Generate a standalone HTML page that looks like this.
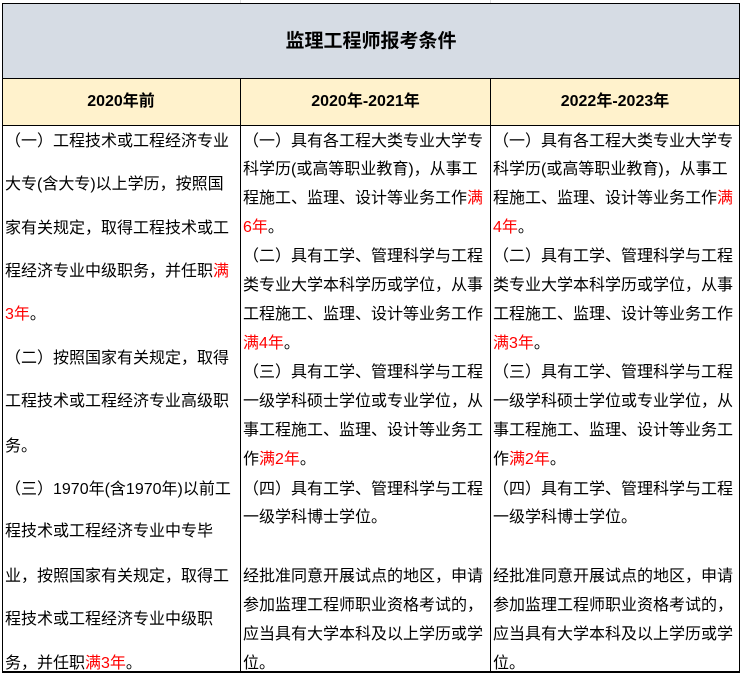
<!DOCTYPE html>
<html><head><meta charset="utf-8"><style>
*{margin:0;padding:0;box-sizing:border-box}
body{width:742px;height:676px;background:#fff;position:relative;overflow:hidden;font-family:"Liberation Sans","Noto Sans CJK SC",sans-serif;color:#000}
.b{position:absolute;background:#000}
.l{position:absolute;font-size:16px;line-height:22px;height:22px;white-space:nowrap;margin-top:2px}
.r{color:#f00}
.h{position:absolute;font-weight:bold;text-align:center;white-space:nowrap}
</style></head><body>
<div style="position:absolute;left:2px;top:3px;width:738px;height:75px;background:#d6dce4"></div>
<div style="position:absolute;left:2px;top:78px;width:738px;height:47px;background:#fff2cc"></div>
<div style="position:absolute;left:240px;top:0;width:1px;height:3px;background:#ddd"></div>
<div style="position:absolute;left:490px;top:0;width:1px;height:3px;background:#ddd"></div>
<div class="b" style="left:2px;top:3px;width:738px;height:1px"></div>
<div class="b" style="left:2px;top:78px;width:738px;height:1px"></div>
<div class="b" style="left:2px;top:125px;width:738px;height:1px"></div>
<div class="b" style="left:2px;top:671px;width:738px;height:2px"></div>
<div class="b" style="left:2px;top:3px;width:1px;height:670px"></div>
<div class="b" style="left:739px;top:3px;width:1px;height:670px"></div>
<div class="b" style="left:240px;top:78px;width:1px;height:595px"></div>
<div class="b" style="left:490px;top:78px;width:1px;height:595px"></div>
<div class="h" style="left:2px;width:738px;top:29px;font-size:19px;line-height:26px">监理工程师报考条件</div>
<div class="h" style="left:2px;width:238px;top:91px;font-size:16px;line-height:22px">2020年前</div>
<div class="h" style="left:241px;width:249px;top:91px;font-size:16px;line-height:22px">2020年-2021年</div>
<div class="h" style="left:491px;width:248px;top:91px;font-size:16px;line-height:22px">2022年-2023年</div>

<div class="l" style="left:5px;top:129px">（一）工程技术或工程经济专业</div>
<div class="l" style="left:5px;top:172px">大专(含大专)以上学历，按照国</div>
<div class="l" style="left:5px;top:216px">家有关规定，取得工程技术或工</div>
<div class="l" style="left:5px;top:259px">程经济专业中级职务，并任职<span class="r">满</span></div>
<div class="l" style="left:5px;top:302px"><span class="r">3年</span>。</div>
<div class="l" style="left:5px;top:346px">（二）按照国家有关规定，取得</div>
<div class="l" style="left:5px;top:389px">工程技术或工程经济专业高级职</div>
<div class="l" style="left:5px;top:434px">务。</div>
<div class="l" style="left:5px;top:477px">（三）1970年(含1970年)以前工</div>
<div class="l" style="left:5px;top:519px">程技术或工程经济专业中专毕</div>
<div class="l" style="left:5px;top:564px">业，按照国家有关规定，取得工</div>
<div class="l" style="left:5px;top:607px">程技术或工程经济专业中级职</div>
<div class="l" style="left:5px;top:651px">务，并任职<span class="r">满3年</span>。</div>

<div class="l" style="left:243px;top:129px">（一）具有各工程大类专业大学专</div>
<div class="l" style="left:243px;top:157px">科学历(或高等职业教育)，从事工</div>
<div class="l" style="left:243px;top:186px">程施工、监理、设计等业务工作<span class="r">满</span></div>
<div class="l" style="left:243px;top:215px"><span class="r">6年</span>。</div>
<div class="l" style="left:243px;top:244px">（二）具有工学、管理科学与工程</div>
<div class="l" style="left:243px;top:273px">类专业大学本科学历或学位，从事</div>
<div class="l" style="left:243px;top:302px">工程施工、监理、设计等业务工作</div>
<div class="l" style="left:243px;top:331px"><span class="r">满4年</span>。</div>
<div class="l" style="left:243px;top:360px">（三）具有工学、管理科学与工程</div>
<div class="l" style="left:243px;top:389px">一级学科硕士学位或专业学位，从</div>
<div class="l" style="left:243px;top:418px">事工程施工、监理、设计等业务工</div>
<div class="l" style="left:243px;top:447px">作<span class="r">满2年</span>。</div>
<div class="l" style="left:243px;top:477px">（四）具有工学、管理科学与工程</div>
<div class="l" style="left:243px;top:505px">一级学科博士学位。</div>
<div class="l" style="left:243px;top:564px">经批准同意开展试点的地区，申请</div>
<div class="l" style="left:243px;top:593px">参加监理工程师职业资格考试的，</div>
<div class="l" style="left:243px;top:622px">应当具有大学本科及以上学历或学</div>
<div class="l" style="left:243px;top:651px">位。</div>

<div class="l" style="left:493px;top:129px">（一）具有各工程大类专业大学专</div>
<div class="l" style="left:493px;top:157px">科学历(或高等职业教育)，从事工</div>
<div class="l" style="left:493px;top:186px">程施工、监理、设计等业务工作<span class="r">满</span></div>
<div class="l" style="left:493px;top:215px"><span class="r">4年</span>。</div>
<div class="l" style="left:493px;top:244px">（二）具有工学、管理科学与工程</div>
<div class="l" style="left:493px;top:273px">类专业大学本科学历或学位，从事</div>
<div class="l" style="left:493px;top:302px">工程施工、监理、设计等业务工作</div>
<div class="l" style="left:493px;top:331px"><span class="r">满3年</span>。</div>
<div class="l" style="left:493px;top:360px">（三）具有工学、管理科学与工程</div>
<div class="l" style="left:493px;top:389px">一级学科硕士学位或专业学位，从</div>
<div class="l" style="left:493px;top:418px">事工程施工、监理、设计等业务工</div>
<div class="l" style="left:493px;top:447px">作<span class="r">满2年</span>。</div>
<div class="l" style="left:493px;top:477px">（四）具有工学、管理科学与工程</div>
<div class="l" style="left:493px;top:505px">一级学科博士学位。</div>
<div class="l" style="left:493px;top:564px">经批准同意开展试点的地区，申请</div>
<div class="l" style="left:493px;top:593px">参加监理工程师职业资格考试的，</div>
<div class="l" style="left:493px;top:622px">应当具有大学本科及以上学历或学</div>
<div class="l" style="left:493px;top:651px">位。</div>
</body></html>
